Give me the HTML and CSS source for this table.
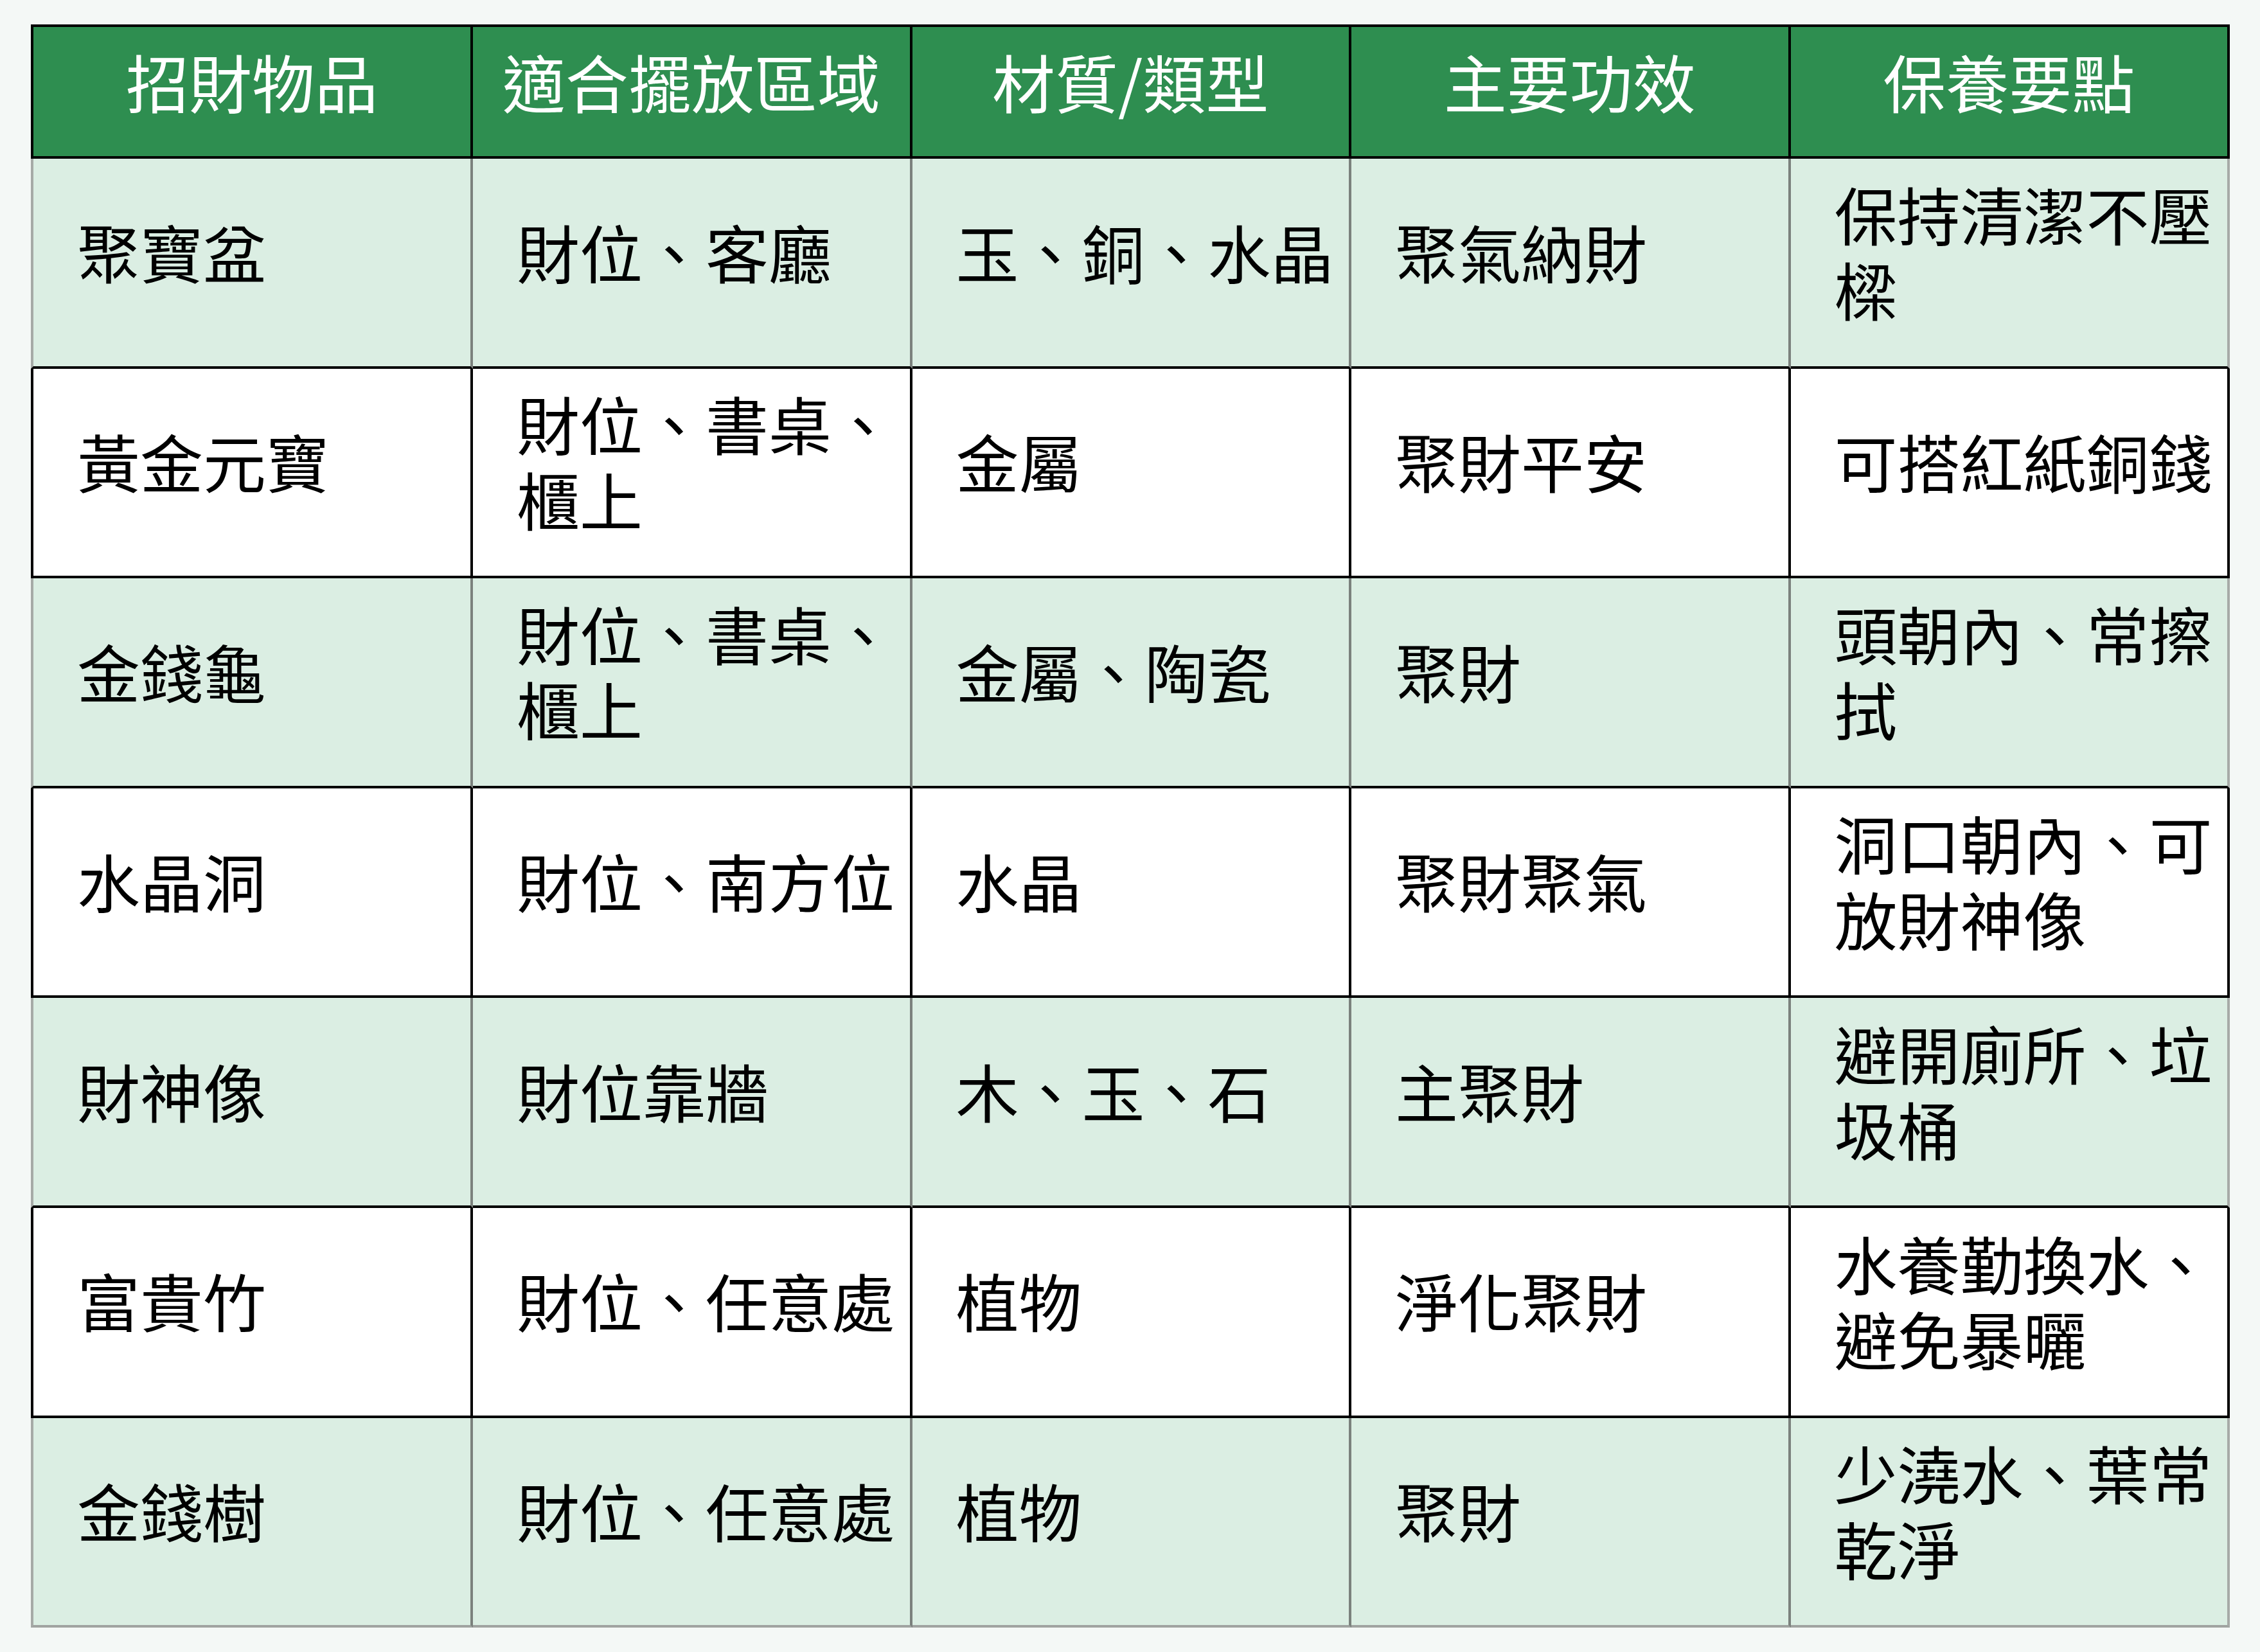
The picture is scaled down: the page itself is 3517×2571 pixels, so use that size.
FILE: index.html
```html
<!DOCTYPE html>
<html lang="zh-Hant">
<head>
<meta charset="utf-8">
<title>招財物品</title>
<link rel="stylesheet" href="styles.css">
</head>
<body>
<table class="wealth">
  <colgroup>
    <col class="c-first">
    <col class="c-rest">
    <col class="c-rest">
    <col class="c-rest">
    <col class="c-rest">
  </colgroup>
  <thead>
    <tr class="head-row">
      <th>招財物品</th>
      <th>適合擺放區域</th>
      <th>材質/類型</th>
      <th>主要功效</th>
      <th>保養要點</th>
    </tr>
  </thead>
  <tbody>
    <tr class="green">
      <td>聚寶盆</td><td>財位、客廳</td><td>玉、銅、水晶</td><td>聚氣納財</td><td>保持清潔不壓樑</td>
    </tr>
    <tr class="white">
      <td>黃金元寶</td><td>財位、書桌、櫃上</td><td>金屬</td><td>聚財平安</td><td>可搭紅紙銅錢</td>
    </tr>
    <tr class="green">
      <td>金錢龜</td><td>財位、書桌、櫃上</td><td>金屬、陶瓷</td><td>聚財</td><td>頭朝內、常擦拭</td>
    </tr>
    <tr class="white">
      <td>水晶洞</td><td>財位、南方位</td><td>水晶</td><td>聚財聚氣</td><td>洞口朝內、可放財神像</td>
    </tr>
    <tr class="green">
      <td>財神像</td><td>財位靠牆</td><td>木、玉、石</td><td>主聚財</td><td>避開廁所、垃圾桶</td>
    </tr>
    <tr class="white">
      <td>富貴竹</td><td>財位、任意處</td><td>植物</td><td>淨化聚財</td><td>水養勤換水、避免暴曬</td>
    </tr>
    <tr class="green last">
      <td>金錢樹</td><td>財位、任意處</td><td>植物</td><td>聚財</td><td>少澆水、葉常乾淨</td>
    </tr>
  </tbody>
</table>
</body>
</html>
```

FILE: styles.css
```css
html, body {
  margin: 0;
  padding: 0;
  background: #f4f8f6;
}

body {
  padding: 38px 0 0 48px;
  font-family: "Noto Sans CJK TC", "Noto Sans CJK SC", sans-serif;
}

.wealth {
  width: 3422px;
  table-layout: fixed;
  border-collapse: separate;
  border-spacing: 0;
  font-size: 98px;
  line-height: 1.2;
}

.c-first {
  width: 688px;
}

.c-rest {
  width: 683.5px;
}

.wealth th,
.wealth td {
  box-sizing: border-box;
  border-right: 4px solid #000;
  border-bottom: 4px solid #000;
  vertical-align: middle;
}

.wealth th:first-child,
.wealth td:first-child {
  border-left: 4px solid #000;
}

.head-row {
  height: 209px;
}

.head-row th {
  border-top: 4px solid #000;
  background: #2e8e50;
  color: #fff;
  font-weight: 400;
  text-align: center;
  padding: 0 0 34px 0;
}

tbody tr {
  height: 326.6px;
}

tbody td {
  color: #000;
  text-align: left;
  padding: 0 8px 36px 68px;
}

.green td {
  background: #dbeee3;
  border-right-color: #7b817d;
}

.green td:first-child {
  border-left-color: #a6aaa7;
}

.green td:last-child {
  border-right-color: #a6aaa7;
}

.white td {
  background: #ffffff;
}

.last td {
  border-bottom-color: #a0a4a1;
}
```
